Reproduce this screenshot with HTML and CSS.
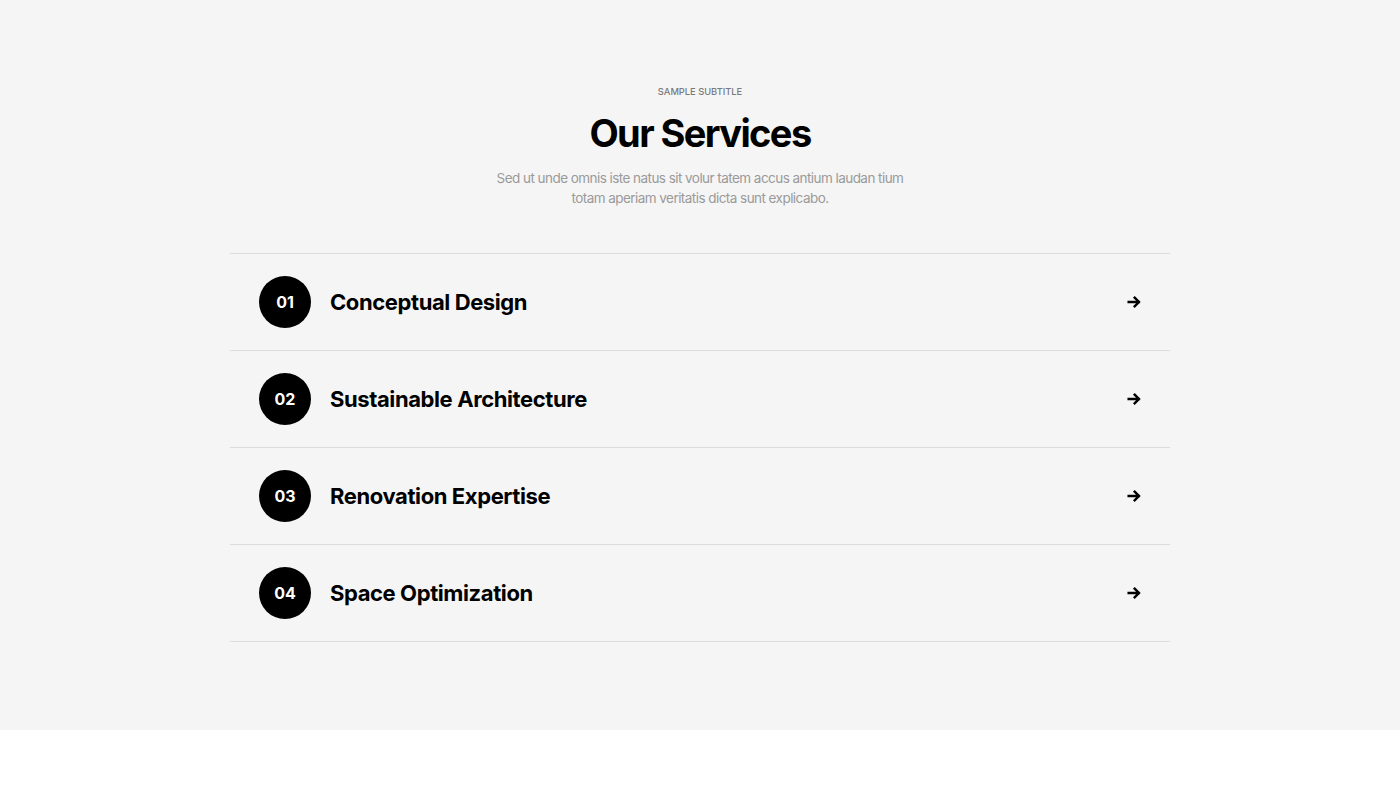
FILE: index.html
```html
<!DOCTYPE html>
<html lang="en">
<head>
<meta charset="utf-8">
<title>Our Services</title>
<link rel="stylesheet" href="styles.css">
</head>
<body>
<section class="services">
  <div class="services-head">
    <p class="subtitle">SAMPLE SUBTITLE</p>
    <h2 class="title">Our Services</h2>
    <p class="lead">Sed ut unde omnis iste natus sit volur tatem accus antium laudan tium totam aperiam veritatis dicta sunt explicabo.</p>
  </div>
  <ul class="service-list">
    <li class="service">
      <span class="num">01</span>
      <span class="name">Conceptual Design</span>
      <svg class="arrow" viewBox="0 0 24 24" width="16" height="16"><path d="M4 12h15M13 5.5l6.5 6.5-6.5 6.5" fill="none" stroke="#000" stroke-width="3.6" stroke-linecap="square"/></svg>
    </li>
    <li class="service">
      <span class="num">02</span>
      <span class="name">Sustainable Architecture</span>
      <svg class="arrow" viewBox="0 0 24 24" width="16" height="16"><path d="M4 12h15M13 5.5l6.5 6.5-6.5 6.5" fill="none" stroke="#000" stroke-width="3.6" stroke-linecap="square"/></svg>
    </li>
    <li class="service">
      <span class="num">03</span>
      <span class="name">Renovation Expertise</span>
      <svg class="arrow" viewBox="0 0 24 24" width="16" height="16"><path d="M4 12h15M13 5.5l6.5 6.5-6.5 6.5" fill="none" stroke="#000" stroke-width="3.6" stroke-linecap="square"/></svg>
    </li>
    <li class="service">
      <span class="num">04</span>
      <span class="name">Space Optimization</span>
      <svg class="arrow" viewBox="0 0 24 24" width="16" height="16"><path d="M4 12h15M13 5.5l6.5 6.5-6.5 6.5" fill="none" stroke="#000" stroke-width="3.6" stroke-linecap="square"/></svg>
    </li>
  </ul>
</section>
</body>
</html>
```

FILE: styles.css
```css
* { box-sizing: border-box; }
html, body { margin: 0; padding: 0; background: #fff; }
body { font-family: Inter, "Noto Sans", sans-serif; color: #000; }

.services {
  background: #f5f5f5;
  height: 730px;
  padding-top: 85px;
}
.services-head {
  text-align: center;
}
.subtitle {
  margin: 0;
  font-size: 9.3px;
  line-height: 14px;
  font-weight: 500;
  color: #7a7a7a;
}
.title {
  margin: 10px 0 0;
  font-size: 38px;
  line-height: 48px;
  font-weight: 700;
  letter-spacing: -1.6px;
}
.lead {
  margin: 11px auto 0;
  width: 430px;
  font-size: 13.5px;
  line-height: 20px;
  color: #9a9a9a;
  letter-spacing: -0.55px;
}
.service-list {
  list-style: none;
  margin: 45px auto 0;
  padding: 0;
  width: 940px;
  border-top: 1px solid #dcdcdc;
}
.service {
  display: flex;
  align-items: center;
  height: 97px;
  padding: 0 29px 0 29px;
  border-bottom: 1px solid #dcdcdc;
}
.num {
  width: 52px;
  height: 52px;
  border-radius: 50%;
  background: #000;
  color: #fff;
  display: flex;
  align-items: center;
  justify-content: center;
  font-size: 16px;
  font-weight: 700;
}
.name {
  margin-left: 19px;
  flex: 1;
  font-size: 22px;
  font-weight: 700;
  letter-spacing: -0.4px;
}
.arrow { flex: none; margin-right: -1px; }
```
